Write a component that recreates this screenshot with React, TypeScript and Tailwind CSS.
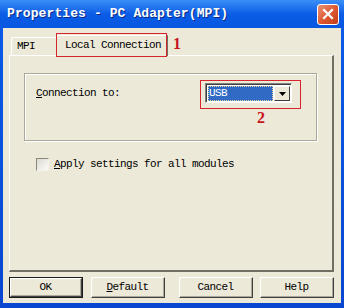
import { ReactNode } from "react";

const CloseButton = () => (
  <div className="w-[22px] h-[21px] rounded-[3px] border border-white bg-gradient-to-br from-[#e99277] via-[#dd5a31] to-[#c23c16] flex items-center justify-center">
    <svg width="12" height="12" viewBox="0 0 12 12">
      <path d="M2 2 L10 10 M10 2 L2 10" stroke="#fff" strokeWidth="2.2" strokeLinecap="square" />
    </svg>
  </div>
);

const Btn = ({ children, isDefault, className }: { children: ReactNode; isDefault?: boolean; className?: string }) => (
  <div className={`w-[74px] h-[21px] ${isDefault ? "border border-[#1a1a1a]" : ""} ${className ?? ""}`}>
    <div className="h-full border-t border-l border-white border-r border-b border-r-[#404040] border-b-[#404040] bg-[#ECE9D8]">
      <div className="h-full border-r border-b border-[#aca899] flex items-center justify-center text-[11px] tracking-[-0.6px] text-black">
        {children}
      </div>
    </div>
  </div>
);

export default function App() {
  return (
    <div className="w-[344px] h-[308px] flex flex-col bg-gradient-to-b from-[#0b5de8] to-[#0a47d0] font-['Liberation_Mono',monospace] select-none">
      {/* title bar */}
      <div className="h-[28px] flex items-center pl-[7px] pr-[5px] bg-gradient-to-b from-[#3b8ef7] via-[#0a5ce6] to-[#0857e0]">
        <span className="flex-1 text-white font-bold text-[13px] tracking-[0.1px] [text-shadow:1px_1px_0_#0a2a8a]">
          Properties - PC Adapter(MPI)
        </span>
        <CloseButton />
      </div>

      {/* body */}
      <div className="relative flex-1 mx-[3px] mb-[5px] bg-[#ECE9D8] flex flex-col pl-[6px] pr-[7px] pt-[5px]">
        {/* tabs */}
        <div className="h-[22px] flex items-end pl-[2px] relative z-10">
          <div className="w-[45px] h-[18px] border-t border-l border-white rounded-tl-[2px] flex items-center pl-[5px] text-[11px] tracking-[-0.6px] text-black">
            MPI
          </div>
          <div className="w-[112px] h-[21px] -mb-px bg-[#ECE9D8] border-t border-l border-white border-r-2 border-r-[#716f64] rounded-tl-[2px] flex items-center pl-[8px] pb-[2px] text-[11px] tracking-[-0.6px] text-black">
            Local Connection
          </div>
        </div>

        {/* panel */}
        <div className="h-[217px] border-t border-l border-white border-r-2 border-b-2 border-r-[#716f64] border-b-[#716f64] flex flex-col">
          {/* group box */}
          <div className="ml-[14px] mt-[17px] w-[293px] h-[68px] border border-[#aca899] shadow-[inset_1px_1px_0_#fff,1px_1px_0_#fff] flex items-start pl-[11px] pt-[9px]">
            <div className="flex-1 h-[20px] flex items-center text-[11px] tracking-[-0.6px] text-black">
              <span><span className="underline">C</span>onnection to:</span>
            </div>
            <div className="w-[87px] h-[20px] mr-[24px] border-t border-l border-[#808080] border-r border-b border-r-white border-b-white">
              <div className="h-full border-t border-l border-[#404040] bg-white flex p-[1px]">
                <div className="flex-1 bg-[#316ac5] outline-1 outline-dotted outline-[#e8d89a] -outline-offset-1 flex items-center pl-[1px] text-[11px] tracking-[-0.6px] text-white">
                  USB
                </div>
                <div className="w-[16px] ml-[1px] bg-[#ECE9D8] border-t border-l border-white border-r border-b border-r-[#404040] border-b-[#404040] flex items-center justify-center">
                  <svg width="7" height="4" viewBox="0 0 7 4">
                    <path d="M0 0 H7 L3.5 4 Z" fill="#000" />
                  </svg>
                </div>
              </div>
            </div>
          </div>

          {/* checkbox */}
          <div className="mt-[15px] pl-[26px] flex items-center">
            <div className="w-[13px] h-[13px] border-t border-l border-[#8a887c] border-r border-b border-r-[#f4f3ee] border-b-[#f4f3ee] bg-gradient-to-br from-[#dcdad0] to-[#fbfbf8]" />
            <span className="ml-[5px] text-[11px] tracking-[-0.6px] text-black">
              <span className="underline">A</span>pply settings for all modules
            </span>
          </div>
        </div>

        {/* buttons */}
        <div className="mt-[5px] flex">
          <Btn isDefault>OK</Btn>
          <Btn className="ml-[8px]">
            <span><span className="underline">D</span>efault</span>
          </Btn>
          <Btn className="ml-[14px]">Cancel</Btn>
          <Btn className="ml-[7px]">Help</Btn>
        </div>

        {/* annotations */}
        <div className="absolute left-[53px] top-[5px] w-[111px] h-[24px] border border-[#d8242c] z-20" />
        <div className="absolute left-[170px] top-[6px] text-[#c8141c] font-['Liberation_Serif',serif] font-bold text-[16px] leading-[20px] z-20">1</div>
        <div className="absolute left-[197px] top-[52px] w-[101px] h-[29px] border border-[#d8242c] z-20" />
        <div className="absolute left-[254px] top-[80px] text-[#c8141c] font-['Liberation_Serif',serif] font-bold text-[16px] leading-[20px] z-20">2</div>
      </div>
    </div>
  );
}
